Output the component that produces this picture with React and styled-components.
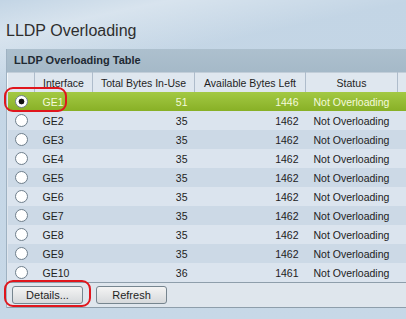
import React from 'react'
import styled, { createGlobalStyle } from 'styled-components'

const GlobalStyle = createGlobalStyle`
    html, body {
        margin: 0;
        padding: 0;
        overflow: hidden;
    }
    body {
        font-family: "Liberation Sans", Arial, sans-serif;
        background:
            linear-gradient(168deg, rgba(255,255,255,0) 0%, rgba(255,255,255,0.35) 9%, rgba(255,255,255,0) 22%),
            linear-gradient(#c3d5e5, #c7d8e7);
    }
`

const rows = [
    { name: 'GE1', used: 51, left: 1446, status: 'Not Overloading' },
    { name: 'GE2', used: 35, left: 1462, status: 'Not Overloading' },
    { name: 'GE3', used: 35, left: 1462, status: 'Not Overloading' },
    { name: 'GE4', used: 35, left: 1462, status: 'Not Overloading' },
    { name: 'GE5', used: 35, left: 1462, status: 'Not Overloading' },
    { name: 'GE6', used: 35, left: 1462, status: 'Not Overloading' },
    { name: 'GE7', used: 35, left: 1462, status: 'Not Overloading' },
    { name: 'GE8', used: 35, left: 1462, status: 'Not Overloading' },
    { name: 'GE9', used: 35, left: 1462, status: 'Not Overloading' },
    { name: 'GE10', used: 36, left: 1461, status: 'Not Overloading' },
]

const App = () => {
    return (
        <Page>
            <GlobalStyle />
            <Title>LLDP Overloading</Title>
            <Panel>
                <PanelHeader>LLDP Overloading Table</PanelHeader>
                <Table>
                    <colgroup>
                        <col style={{ width: 27 }} />
                        <col style={{ width: 58 }} />
                        <col style={{ width: 102 }} />
                        <col style={{ width: 111 }} />
                        <col style={{ width: 92 }} />
                        <col />
                    </colgroup>
                    <thead>
                        <tr>
                            <Th />
                            <Th>Interface</Th>
                            <Th>Total Bytes In-Use</Th>
                            <Th>Available Bytes Left</Th>
                            <Th>Status</Th>
                            <Th />
                        </tr>
                    </thead>
                    <tbody>
                        {rows.map((r, i) => (
                            <Row key={r.name} selected={i === 0} odd={i % 2 === 1}>
                                <RadioCell>
                                    {i === 0 && <Ring />}
                                    <Radio checked={i === 0} />
                                </RadioCell>
                                <Td>{r.name}</Td>
                                <Td align="right">{r.used}</Td>
                                <Td align="right">{r.left}</Td>
                                <Td pad={8}>{r.status}</Td>
                                <Td />
                            </Row>
                        ))}
                    </tbody>
                </Table>
                <Footer>
                    <ButtonWrap>
                        <ButtonRing />
                        <Button>Details...</Button>
                    </ButtonWrap>
                    <Button>Refresh</Button>
                </Footer>
            </Panel>
        </Page>
    )
}

const Page = styled.div`
    width: 406px;
    height: 319px;
    overflow: hidden;
    padding-top: 21px;
    box-sizing: border-box;
`

const Title = styled.h1`
    margin: 0 0 8px 6px;
    font-size: 16px;
    line-height: 20px;
    font-weight: normal;
    color: #2e2e2e;
`

const Panel = styled.div`
    margin-left: 6px;
    width: 420px;
    background: #dfe6ee;
    border-left: 1px solid #9fb2c2;
`

const PanelHeader = styled.div`
    height: 23px;
    line-height: 23px;
    padding-left: 7px;
    font-size: 11px;
    font-weight: bold;
    color: #1f2a33;
    background: linear-gradient(#adc0ce, #a5b9c8);
`

const Table = styled.table`
    width: 100%;
    table-layout: fixed;
    border-collapse: collapse;
    font-size: 10.5px;
`

const Th = styled.th`
    height: 19px;
    padding: 0;
    font-weight: normal;
    text-align: center;
    color: #1e1e1e;
    background: #dfe7ef;
    border-top: 1px solid #c2ced9;
    border-right: 1px solid #aebccb;
    border-left: 1px solid #f5f8fb;
    white-space: nowrap;
    overflow: hidden;
`

const Row = styled.tr`
    height: 19px;
    background: ${({ selected, odd }) =>
        selected
            ? 'linear-gradient(#a3c944, #88b026)'
            : odd ? '#dbe4ee' : '#ccd9e6'};
    color: ${({ selected }) => (selected ? '#f4fadb' : '#222')};
`

const Td = styled.td`
    padding: 0 ${({ align }) => (align === 'right' ? '7px' : '0')} 0 ${({ pad, align }) => (align === 'right' ? 0 : pad ?? 8)}px;
    text-align: ${({ align }) => align || 'left'};
    white-space: nowrap;
    overflow: hidden;
`

const RadioCell = styled.td`
    position: relative;
    padding: 0 0 0 7px;
`

const Radio = styled.span`
    display: block;
    box-sizing: border-box;
    width: 13px;
    height: 13px;
    border-radius: 50%;
    border: 1px solid #6f7f8c;
    background: ${({ checked }) =>
        checked
            ? 'radial-gradient(circle, #111 0 2.6px, #fff 3.2px)'
            : 'radial-gradient(circle at 40% 35%, #fff 0 60%, #eef1f4 100%)'};
`

const Ring = styled.span`
    position: absolute;
    left: -4px;
    top: -5px;
    width: 63px;
    height: 25px;
    box-sizing: border-box;
    border: 2.5px solid #e0161d;
    border-radius: 9px;
    z-index: 2;
`

const Footer = styled.div`
    display: flex;
    align-items: center;
    gap: 13px;
    height: 24px;
    padding-left: 5px;
    background: #dfe6ed;
    border-top: 1px solid #8e9eab;
    border-bottom: 1px solid #8e9eab;
`

const ButtonWrap = styled.span`
    position: relative;
    display: flex;
`

const ButtonRing = styled.span`
    position: absolute;
    left: -8px;
    right: -8px;
    top: -6px;
    bottom: -3px;
    border: 2.5px solid #e0161d;
    border-radius: 9px;
`

const Button = styled.button`
    width: 71px;
    height: 18px;
    padding: 0;
    font-family: "Liberation Sans", Arial, sans-serif;
    font-size: 11px;
    color: #1e1e1e;
    background: linear-gradient(#f4f4f4, #d6d9dc);
    border: 1px solid #76858f;
    border-radius: 3px;
`

export default App
